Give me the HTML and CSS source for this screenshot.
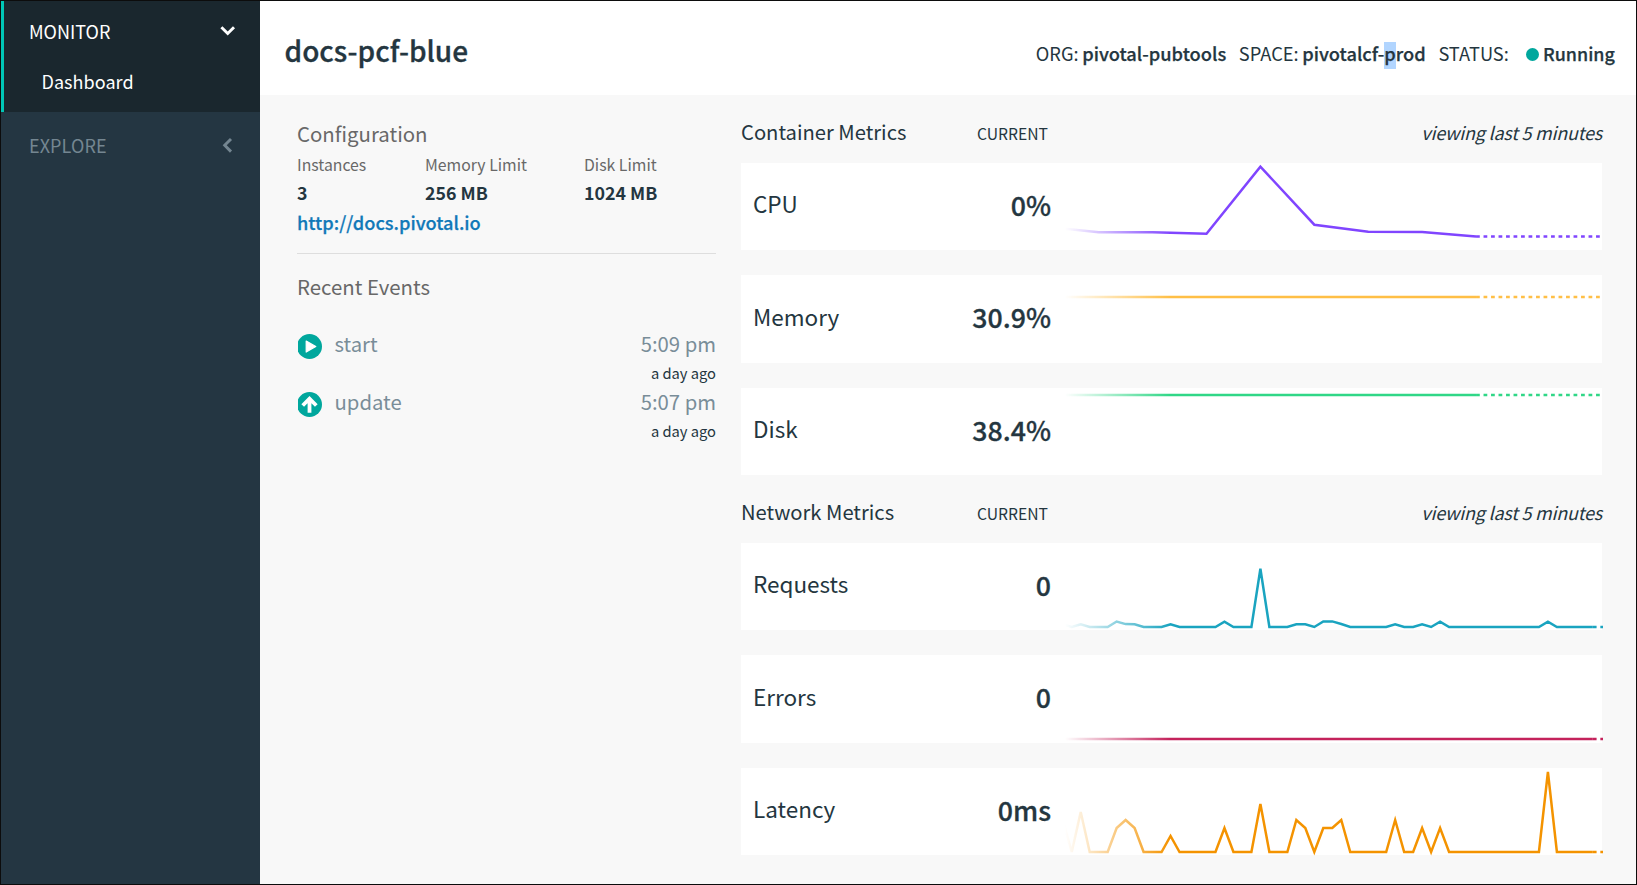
FILE: index.html
```html
<!DOCTYPE html>
<html lang="en">
<head>
<meta charset="utf-8">
<title>docs-pcf-blue</title>
<link rel="stylesheet" href="styles.css">
</head>
<body>
<div class="window">
  <nav class="sidebar">
    <div class="nav-group nav-group-active">
      <div class="nav-head"><span>MONITOR</span>
        <svg class="chevron" viewBox="0 0 16 16"><polyline points="1.4,4.2 7.7,10.5 14,4.2"/></svg>
      </div>
      <a class="nav-item">Dashboard</a>
    </div>
    <div class="nav-group">
      <div class="nav-head nav-head-muted"><span>EXPLORE</span>
        <svg class="chevron" viewBox="0 0 16 16"><polyline points="11,2 4.7,8.3 11,14.6"/></svg>
      </div>
    </div>
  </nav>
  <main class="main">
    <header class="app-header">
      <h1 class="app-name">docs-pcf-blue</h1>
      <div class="app-meta">
        <span class="meta-org">ORG:</span><b class="meta-org-name">pivotal-pubtools</b>
        <span class="meta-space">SPACE:</span><b class="meta-space-name">pivotalcf-<mark class="selection">p</mark>rod</b>
        <span>STATUS:</span><i class="status-dot"></i><b class="meta-running">Running</b>
      </div>
    </header>
    <div class="content">
      <section class="details">
        <h2 class="details-title">Configuration</h2>
        <dl class="stats">
          <div><dt>Instances</dt><dd>3</dd></div>
          <div><dt>Memory Limit</dt><dd>256 MB</dd></div>
          <div><dt>Disk Limit</dt><dd>1024 MB</dd></div>
        </dl>
        <a class="app-link">http://docs.pivotal.io</a>
        <h2 class="details-title events-title">Recent Events</h2>
        <ul class="events">
          <li class="event">
            <svg class="event-icon" viewBox="0 0 24 25"><circle cx="11.5" cy="12.5" r="12.5"/><path class="glyph" d="M8.2 7.1v11l9.6-5.5z"/></svg>
            <span class="event-name">start</span>
            <span class="event-time">5:09 pm</span>
            <span class="event-ago">a day ago</span>
          </li>
          <li class="event">
            <svg class="event-icon" viewBox="0 0 24 25"><circle cx="11.5" cy="12.5" r="12.5"/><path class="arrow" d="M11.5 20.8V7.5M4.7 13.5l6.8-6.8 6.8 6.8"/></svg>
            <span class="event-name">update</span>
            <span class="event-time">5:07 pm</span>
            <span class="event-ago">a day ago</span>
          </li>
        </ul>
      </section>
      <div class="metrics">
        <section>
          <div class="metrics-head"><h2 class="metrics-title">Container Metrics</h2><span class="metrics-current">CURRENT</span><em class="metrics-range">viewing last 5 minutes</em></div>
          <div class="cards">
            <div class="card"><span class="label">CPU</span><span class="value">0%</span>
              <svg class="chart cpu" viewBox="2.253 0 59.878 88" preserveAspectRatio="none"><polyline points="0,63.6 6,69.3 12,69.2 18,70.7 24,3.7 30,61.7 36,68.8 42,69 48,73.4"/><polyline class="pending" points="48,73.4 63,73.4"/></svg></div>
            <div class="card"><span class="label">Memory</span><span class="value">30.9%</span>
              <svg class="chart memory" viewBox="2.253 0 59.878 88" preserveAspectRatio="none"><polyline points="0,22.1 18,22.1 24,22 48,22"/><polyline class="pending" points="48,22 63,22"/></svg></div>
            <div class="card"><span class="label">Disk</span><span class="value">38.4%</span>
              <svg class="chart disk" viewBox="2.253 0 59.878 88" preserveAspectRatio="none"><polyline points="0,7 48,7"/><polyline class="pending" points="48,7 63,7"/></svg></div>
          </div>
        </section>
        <section>
          <div class="metrics-head"><h2 class="metrics-title">Network Metrics</h2><span class="metrics-current">CURRENT</span><em class="metrics-range">viewing last 5 minutes</em></div>
          <div class="cards">
            <div class="card"><span class="label">Requests</span><span class="value">0</span>
              <svg class="chart requests" viewBox="2.253 0 59.878 88" preserveAspectRatio="none"><polyline points="2,81.3 3,84 4,81.3 5,84 7,84 8,78.5 9,81.1 10,81.3 11,84 13,84 14,81.3 15,84 19,84 20,78.6 21,84 23,84 24,25.8 25,84 27,84 28,81.3 29,81.3 30,84 31,78.4 32,78.4 33,81 34,84 38,84 39,81.3 40,84 41,84 42,81.3 43,84 44,78.6 45,84 55,84 56,78.6 57,84 61,84"/><polyline class="pending" points="61,84 63,84"/></svg></div>
            <div class="card"><span class="label">Errors</span><span class="value">0</span>
              <svg class="chart errors" viewBox="2.253 0 59.878 88" preserveAspectRatio="none"><polyline points="2,84 61,84"/><polyline class="pending" points="61,84 63,84"/></svg></div>
            <div class="card"><span class="label">Latency</span><span class="value">0ms</span>
              <svg class="chart latency" viewBox="2.253 0 59.878 88" preserveAspectRatio="none"><polyline points="2,52 3,84 4,44 5,84 7,84 8,60 9,52 10,60 11,84 13,84 14,68 15,84 19,84 20,60 21,84 23,84 24,36 25,84 27,84 28,52 29,60 30,84 31,60 32,60 33,52 34,84 38,84 39,52 40,84 41,84 42,60 43,84 44,60 45,84 55,84 56,4 57,84 61,84"/><polyline class="pending" points="61,84 63,84"/></svg></div>
          </div>
        </section>
      </div>
    </div>
  </main>
</div>
</body>
</html>
```
FILE: styles.css
```css
* { box-sizing: border-box; }

body {
  margin: 0;
  font-family: "Noto Sans CJK SC", "Noto Sans", sans-serif;
  color: #243640;
}

h1, h2, dl, dd, ul { margin: 0; padding: 0; font-weight: 400; }
ul { list-style: none; }

.window {
  display: grid;
  grid-template-columns: 259px 1fr;
  width: 1637px;
  height: 885px;
  border: 1px solid #0c0c0c;
  background: #f8f8f8;
  overflow: hidden;
}

/* Sidebar */
.sidebar { background: #243642; color: #fff; font-size: 18px; line-height: 24px; }
.nav-group-active { height: 111px; background: #1a272e; border-left: 3px solid #00c7b7; }
.nav-head { display: flex; align-items: center; justify-content: space-between; height: 60px; padding: 0 24px 0 25px; }
.nav-item { display: block; padding: 8px 0 0 37.5px; letter-spacing: .05px; }
.nav-head-muted { padding-left: 28px; color: #748691; height: 65px; letter-spacing: .1px; }
.chevron { width: 16px; height: 16px; fill: none; stroke: currentColor; stroke-width: 2.9; }

/* Header */
.app-header { display: flex; align-items: flex-start; justify-content: space-between; height: 94px; padding: 0 21.2px 0 24.5px; background: #fff; }
.app-name { padding-top: 34px; font-size: 28px; line-height: 30px; font-weight: 500; -webkit-text-stroke: .3px; }
.app-meta { display: flex; align-items: baseline; padding-top: 39px; font-size: 18.25px; line-height: 27px; }
.app-meta b { font-weight: 500; -webkit-text-stroke: .25px; }
.meta-org, .meta-space { margin-right: 3.6px; }
.meta-org-name { margin-right: 12.6px; }
.meta-space-name { margin-right: 12.6px; }
.selection { display: inline-block; height: 27px; line-height: 23px; background: #b1d5ff; color: inherit; }
.app-meta .meta-running { font-size: 17.9px; }
.status-dot { width: 13px; height: 13px; margin: 0 3.7px 0 17.5px; border-radius: 50%; background: #00a79d; }

/* Content */
.content { display: grid; grid-template-columns: 419px 861px; gap: 25px; padding-left: 37px; }
.details-title { color: #686868; font-size: 20.4px; line-height: 24px; padding-top: 26px; }
.stats { display: flex; padding-top: 8px; }
.stats div:nth-child(1) { width: 128px; }
.stats div:nth-child(2) { width: 159px; }
.stats dt { color: #686868; font-size: 15.8px; line-height: 24px; }
.stats dd { font-size: 17.8px; line-height: 30px; font-weight: 700; }
.app-link { display: block; padding-bottom: 16px; border-bottom: 1px solid #dedede; color: #1178b8; font-size: 18.2px; line-height: 30px; font-weight: 500; -webkit-text-stroke: .25px; }
.events-title { padding-top: 20px; }
.events { padding-top: 34px; }
.event { display: grid; grid-template-columns: 24px 1fr auto; column-gap: 12.5px; height: 58px; grid-template-rows: 29px 29px; line-height: 24px; color: #798d98; font-size: 20.3px; padding-left: 1px; }
.event-name, .event-time { margin-top: -1px; }
.event-icon { width: 24px; height: 25px; fill: #00a79d; margin-top: 2px; }
.event-icon .glyph { fill: #fff; stroke: #fff; stroke-width: 1.2; stroke-linejoin: round; }
.event-icon .arrow { fill: none; stroke: #fff; stroke-width: 3.8; }
.event-ago { grid-column: 3; text-align: right; color: #243640; font-size: 14.7px; }

/* Metrics */
.metrics-head { display: flex; align-items: baseline; height: 68px; padding-top: 25px; line-height: 24px; }
.metrics-title { font-size: 20.2px; width: 236px; white-space: nowrap; }
.metrics-current { font-size: 15.7px; }
.metrics-range { font-size: 18px; letter-spacing: -.22px; margin-left: auto; }
.cards { display: grid; grid-template-rows: 87px 88px 87px; row-gap: 25px; }
.card { display: grid; grid-template-columns: 148px 150px 538px; column-gap: 0; align-items: center; padding-left: 12px; background: #fff; }
.label { font-size: 22.5px; line-height: 30px; padding-bottom: 8px; }
.card:nth-child(2) .label { padding-bottom: 6px; }
.value { font-size: 26.7px; line-height: 30px; font-weight: 500; -webkit-text-stroke: .3px; text-align: right; padding-bottom: 5px; }

/* Charts */
.chart {
  width: 538px;
  height: 88px;
  margin-left: 14px;
  align-self: start;
  fill: none;
  stroke-width: 2.5;
  -webkit-mask-image: linear-gradient(to right, transparent 0, #000 105px);
  mask-image: linear-gradient(to right, transparent 0, #000 105px);
}
.chart polyline { vector-effect: non-scaling-stroke; }
.chart .pending { stroke-dasharray: 3.75 3.75; }
.cpu { stroke: #8045ff; }
.memory { stroke: #ffbf46; }
.disk { stroke: #30d787; }
.requests { stroke: #1aa4c0; }
.errors { stroke: #c4225b; }
.latency { stroke: #f49300; }
```
